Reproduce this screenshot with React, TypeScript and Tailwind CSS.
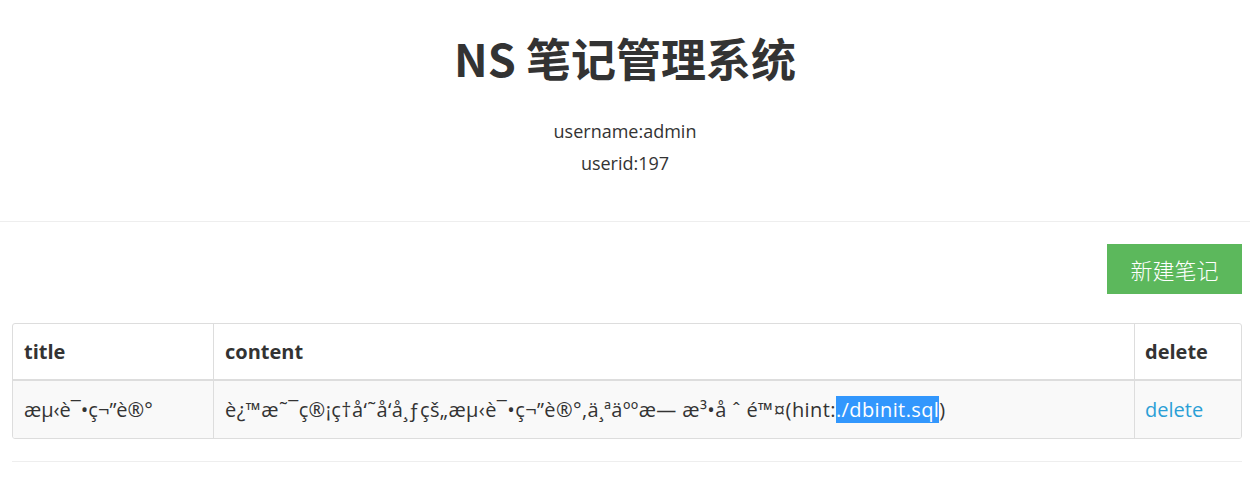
export default function App() {
  const font = { fontFamily: '"Open Sans", "Noto Sans CJK SC", sans-serif' }
  return (
    <div style={font} className="min-h-screen bg-white text-[#333]">
      <div className="flex flex-col items-center pt-[33px]">
        <h1
          style={{ fontFamily: '"Noto Sans CJK SC", "Open Sans", sans-serif' }}
          className="h-[50px] text-[45px] font-bold leading-[50px] text-[#333]"
        >
          NS 笔记管理系统
        </h1>
        <p className="mt-[32px] text-[18px] leading-[32px]">username:admin</p>
        <p className="text-[18px] leading-[32px]">userid:197</p>
      </div>
      <hr className="mt-[42px] border-t border-[#eee]" />
      <div className="pl-3 pr-2">
        <div className="mt-[22px] flex justify-end">
          <button
            style={{ fontFamily: '"Noto Sans CJK SC", sans-serif' }}
            className="h-[50px] w-[135px] bg-[#5cb85c] text-[22px] font-light text-white"
          >
            新建笔记
          </button>
        </div>
        <table className="mt-[29px] w-full border-separate border-spacing-0 overflow-hidden rounded-[3px] border border-[#ddd] text-[20px]">
          <thead>
            <tr className="h-[57px]">
              <th className="w-[200px] border-b-2 border-[#ddd] px-[11px] text-left font-bold">title</th>
              <th className="border-b-2 border-l border-[#ddd] px-[11px] text-left font-bold">content</th>
              <th className="w-[107px] border-b-2 border-l border-[#ddd] px-[10px] text-left font-bold">delete</th>
            </tr>
          </thead>
          <tbody>
            <tr className="h-[57px] bg-[#f9f9f9]">
              <td className="px-[11px]">æµ‹è¯•ç¬”è®°</td>
              <td className="whitespace-nowrap border-l border-[#ddd] px-[11px] tracking-[0.4px]">
                è¿™æ˜¯ç®¡ç†å‘˜å‘å¸ƒçš„æµ‹è¯•ç¬”è®°,ä¸ªäººæ— æ³•å ˆ é™¤(hint:
                <span className="bg-[#3297fd] text-white">./dbinit.sql</span>)
              </td>
              <td className="border-l border-[#ddd] px-[10px]">
                <a className="text-[#2a9fd6]">delete</a>
              </td>
            </tr>
          </tbody>
        </table>
        <hr className="mt-[22px] border-t border-[#eee]" />
      </div>
    </div>
  )
}
